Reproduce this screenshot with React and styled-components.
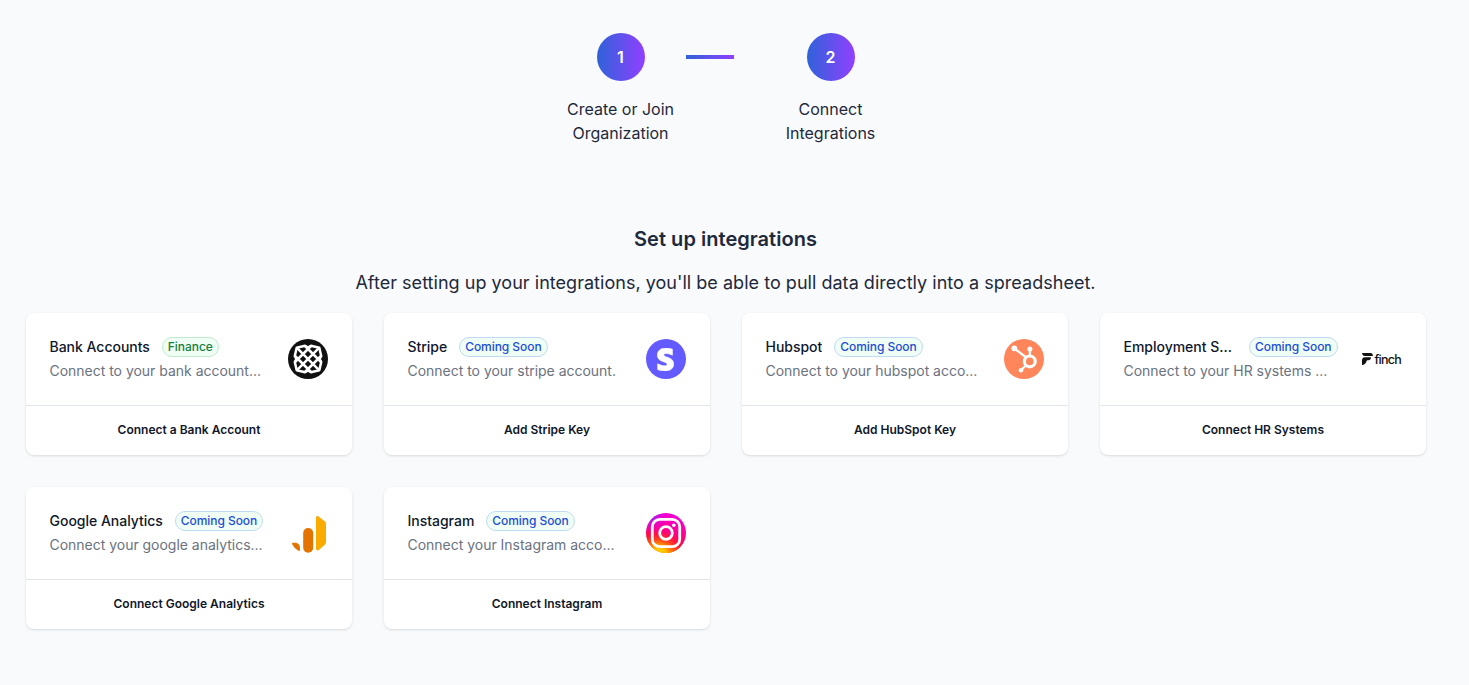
import React from 'react';
import styled, { createGlobalStyle } from 'styled-components';
import { FaStripeS } from 'react-icons/fa';

const GlobalStyle = createGlobalStyle`
  *, *::before, *::after { box-sizing: border-box; }
  body {
    margin: 0;
    background: #f9fafc;
    color: #1e293b;
    font-family: Inter, "Liberation Sans", sans-serif;
    -webkit-font-smoothing: antialiased;
  }
  h1, h3, p { margin: 0; }
`;

const Page = styled.main`
  width: 1400px;
  min-height: 685px;
  margin-left: 25.5px;
  padding-top: 33px;
`;

const Stepper = styled.div`
  display: flex;
  width: 340px;
  margin: 0 auto;
`;

const Step = styled.div`
  display: flex;
  flex-direction: column;
  align-items: center;
  width: 130px;
`;

const StepNumber = styled.div`
  display: flex;
  align-items: center;
  justify-content: center;
  width: 48px;
  height: 48px;
  margin-bottom: 16px;
  border-radius: 50%;
  background: linear-gradient(to right, #2f62d9, #9140ff);
  color: #fff;
  font-size: 16px;
  font-weight: 600;
  line-height: 24px;
`;

const StepLabel = styled.p`
  width: 120px;
  text-align: center;
  font-size: 16px;
  line-height: 24px;
`;

const StepLine = styled.div`
  width: 48px;
  height: 4px;
  margin: 22px 32px 0 0;
  background: linear-gradient(to right, #2f62d9, #9140ff);
`;

const Heading = styled.h1`
  margin-top: 80px;
  text-align: center;
  font-size: 20px;
  font-weight: 600;
  line-height: 28px;
  letter-spacing: 0.03px;
`;

const Lead = styled.p`
  margin: 16px 0;
  text-align: center;
  font-size: 18px;
  line-height: 28px;
  letter-spacing: 0.03px;
`;

const Grid = styled.div`
  display: grid;
  grid-template-columns: repeat(4, minmax(0, 1fr));
  gap: 32px;
`;

const Card = styled.section`
  height: 142px;
  border-radius: 8px;
  background: #fff;
  box-shadow: 0 1px 3px rgba(0, 0, 0, 0.1), 0 1px 2px -1px rgba(0, 0, 0, 0.1);
`;

const CardBody = styled.div`
  display: flex;
  align-items: center;
  gap: 24px;
  height: 92px;
  padding: 24px;
`;

const CardText = styled.div`
  flex: 1;
  min-width: 0;
`;

const TitleRow = styled.div`
  display: flex;
  align-items: center;
  gap: 12px;
`;

const Title = styled.h3`
  overflow: hidden;
  text-overflow: ellipsis;
  white-space: nowrap;
  color: #0f172a;
  font-size: 14px;
  font-weight: 500;
  line-height: 20px;
  letter-spacing: -0.02px;
`;

const Badge = styled.span`
  flex-shrink: 0;
  height: 20px;
  padding: 1px 5px;
  border: 1px solid ${(p) => (p.$tone === 'green' ? '#bfeacd' : '#c0daf3')};
  border-radius: 10px;
  background: #f0fdf4;
  color: ${(p) => (p.$tone === 'green' ? '#15803d' : '#1d4ed8')};
  font-size: 12px;
  font-weight: 500;
  line-height: 16px;
  letter-spacing: -0.06px;
`;

const Description = styled.p`
  margin-top: 4px;
  overflow: hidden;
  text-overflow: ellipsis;
  white-space: nowrap;
  color: #6b7280;
  font-size: 14px;
  line-height: 20px;
  letter-spacing: -0.02px;
`;

const CardAction = styled.button`
  display: block;
  width: 100%;
  height: 50px;
  padding: 0 0 2px 1px;
  border: 0;
  border-top: 1px solid #e2e5eb;
  border-radius: 0;
  background: transparent;
  color: #0f172a;
  font: 600 12px/16px Inter, "Liberation Sans", sans-serif;
`;

const LogoDisc = styled.div`
  display: flex;
  flex-shrink: 0;
  align-items: center;
  justify-content: center;
  width: 40px;
  height: 40px;
  border-radius: 50%;
  background: #635bff;
  color: #fff;
`;

const LogoSvg = styled.svg`
  display: block;
  flex-shrink: 0;
  width: 40px;
  height: 40px;
`;

const FinchMark = styled.div`
  display: flex;
  flex-shrink: 0;
  align-items: center;
  width: 40px;
  height: 40px;
  color: #111;
`;

const FinchWord = styled.span`
  margin-left: 2px;
  padding-top: 2px;
  font-size: 12.5px;
  font-weight: 500;
  line-height: 16px;
  letter-spacing: -0.75px;
`;

const BankLogo = () => (
  <LogoSvg viewBox="0 0 40 40">
    <circle cx="20" cy="20" r="20" fill="#111" />
    <g fill="none" stroke="#fff" strokeWidth="2.5" strokeLinejoin="round">
      <path d="M8.7 8.7 17 6.8 20 8.6 23 6.8 31.3 8.7 33.2 17 31.4 20 33.2 23 31.3 31.3 23 33.2 20 31.4 17 33.2 8.7 31.3 6.8 23 8.6 20 6.8 17Z" />
      <path d="M8.7 8.7 31.3 31.3M31.3 8.7 8.7 31.3M23 7 7 23M33 17 17 33M17 7 33 23M7 17 23 33" />
    </g>
  </LogoSvg>
);

const StripeLogo = () => (
  <LogoDisc><FaStripeS size={23} strokeWidth={14} stroke="currentColor" /></LogoDisc>
);

const HubspotLogo = () => (
  <LogoSvg viewBox="0 0 40 40">
    <circle cx="20" cy="20" r="20" fill="#ff855a" />
    <circle cx="10.3" cy="9.3" r="2.9" fill="#fff" />
    <circle cx="25.9" cy="10" r="2.5" fill="#fff" />
    <circle cx="17" cy="31.2" r="2.3" fill="#fff" />
    <g fill="none" stroke="#fff">
      <path d="M10.5 9.5 21.5 18M25.9 10V17M17 31.2 21.5 26.8" strokeWidth="2.3" />
      <circle cx="25.8" cy="22.4" r="5.4" strokeWidth="3.2" />
    </g>
  </LogoSvg>
);

const FinchLogo = () => (
  <FinchMark>
    <svg width="11" height="12" viewBox="0 0 11 12" fill="currentColor">
      <path d="M0 0H9Q10.8 .2 11 3H3Q.4 3 0 0Z" />
      <path d="M0 12V7.5Q0 4.2 3.2 4.2H9Q8.8 7.2 6.5 7.2H5.5Q4.7 7.3 4.5 8.2 3.7 11.5 0 12Z" />
    </svg>
    <FinchWord>finch</FinchWord>
  </FinchMark>
);

const AnalyticsLogo = () => (
  <LogoSvg viewBox="0 0 40 40">
    <path d="M28 4.5Q28 2.5 30 3L37 8.5Q38 9.5 38 11V29Q38 30.5 37 31.5L30.5 37.3Q28 38 28 35.5Z" fill="#f9ab00" />
    <rect x="15.2" y="15" width="10" height="24.8" rx="5" fill="#e37400" />
    <path d="M4 31Q3.4 30 5 29.8H8Q12 30.7 12 35V37Q11.7 38.5 10 37.6Q6 35 4 31Z" fill="#e37400" />
  </LogoSvg>
);

const InstagramLogo = () => (
  <LogoSvg viewBox="0 0 40 40">
    <defs>
      <linearGradient id="ig-base" x1="0.7" y1="0" x2="0.4" y2="1">
        <stop offset="0" stopColor="#f000e0" />
        <stop offset="0.4" stopColor="#ff0098" />
        <stop offset="0.72" stopColor="#ff0840" />
        <stop offset="1" stopColor="#ff5a00" />
      </linearGradient>
      <radialGradient id="ig-warm" cx="0.33" cy="1.05" r="0.62">
        <stop offset="0" stopColor="#ffdc00" />
        <stop offset="0.3" stopColor="#ffc000" />
        <stop offset="1" stopColor="#ff2d00" stopOpacity="0" />
      </radialGradient>
      <radialGradient id="ig-cool" cx="0.1" cy="0.06" r="0.45">
        <stop offset="0" stopColor="#7a30ff" />
        <stop offset="1" stopColor="#f000e8" stopOpacity="0" />
      </radialGradient>
    </defs>
    <circle cx="20" cy="20" r="20" fill="url(#ig-base)" />
    <circle cx="20" cy="20" r="20" fill="url(#ig-warm)" />
    <circle cx="20" cy="20" r="20" fill="url(#ig-cool)" />
    <rect x="6.3" y="6.3" width="27.4" height="27.4" rx="7.5" fill="none" stroke="#fff" strokeWidth="2.8" />
    <circle cx="20" cy="20" r="6.3" fill="none" stroke="#fff" strokeWidth="2.8" />
    <circle cx="27.8" cy="12.2" r="1.8" fill="#fff" />
  </LogoSvg>
);

const integrations = [
  { title: 'Bank Accounts', badge: 'Finance', tone: 'green', text: 'Connect to your bank account...', action: 'Connect a Bank Account', Logo: BankLogo },
  { title: 'Stripe', badge: 'Coming Soon', text: 'Connect to your stripe account.', action: 'Add Stripe Key', Logo: StripeLogo },
  { title: 'Hubspot', badge: 'Coming Soon', text: 'Connect to your hubspot acco...', action: 'Add HubSpot Key', Logo: HubspotLogo },
  { title: 'Employment Systems', badge: 'Coming Soon', text: 'Connect to your HR systems ...', action: 'Connect HR Systems', Logo: FinchLogo },
  { title: 'Google Analytics', badge: 'Coming Soon', text: 'Connect your google analytics...', action: 'Connect Google Analytics', Logo: AnalyticsLogo },
  { title: 'Instagram', badge: 'Coming Soon', text: 'Connect your Instagram acco...', action: 'Connect Instagram', Logo: InstagramLogo },
];

export default function App() {
  return (
    <>
      <GlobalStyle />
      <Page>
        <Stepper>
          <Step>
            <StepNumber>1</StepNumber>
            <StepLabel>Create or Join Organization</StepLabel>
          </Step>
          <StepLine />
          <Step>
            <StepNumber>2</StepNumber>
            <StepLabel>Connect Integrations</StepLabel>
          </Step>
        </Stepper>
        <Heading>Set up integrations</Heading>
        <Lead>After setting up your integrations, you'll be able to pull data directly into a spreadsheet.</Lead>
        <Grid>
          {integrations.map(({ title, badge, tone, text, action, Logo }) => (
            <Card key={title}>
              <CardBody>
                <CardText>
                  <TitleRow>
                    <Title>{title}</Title>
                    <Badge $tone={tone}>{badge}</Badge>
                  </TitleRow>
                  <Description>{text}</Description>
                </CardText>
                <Logo />
              </CardBody>
              <CardAction>{action}</CardAction>
            </Card>
          ))}
        </Grid>
      </Page>
    </>
  );
}
